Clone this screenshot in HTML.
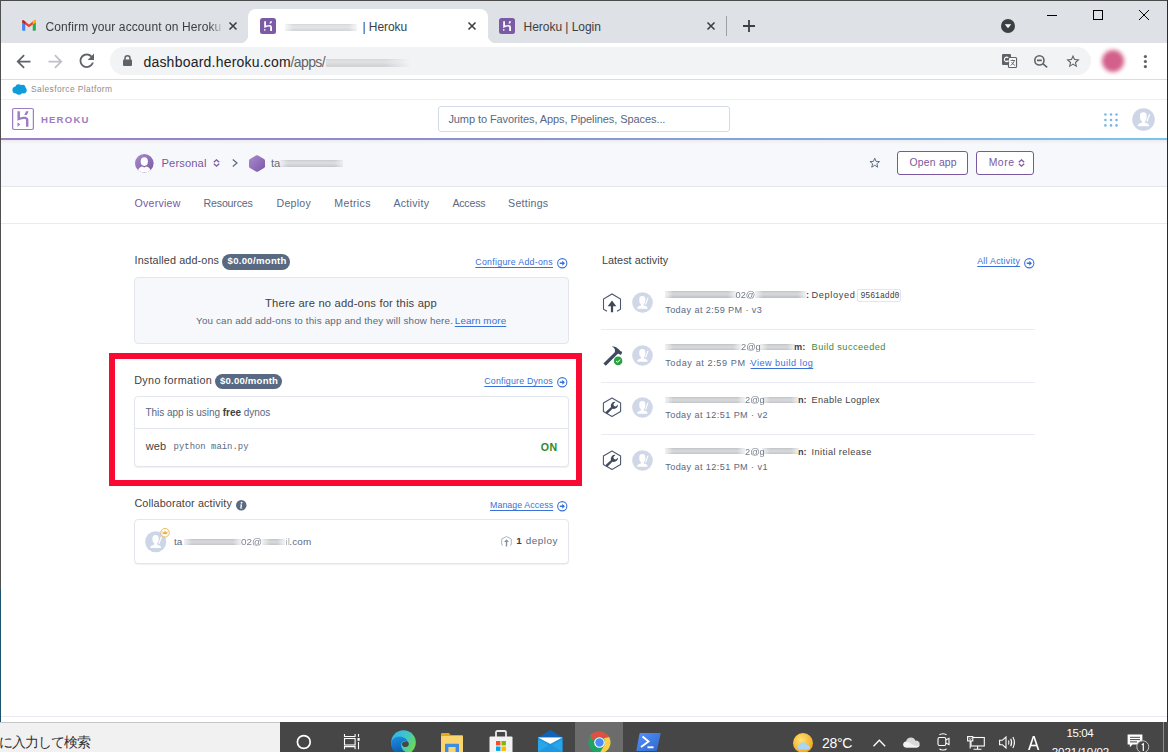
<!DOCTYPE html>
<html><head><meta charset="utf-8"><style>
*{margin:0;padding:0;box-sizing:border-box}
html,body{width:1168px;height:752px;overflow:hidden;background:#fff;font-family:"Liberation Sans",sans-serif}
.a{position:absolute}
.t{position:absolute;line-height:0;white-space:nowrap}
svg{position:absolute;overflow:visible}
.u{text-decoration:underline;text-underline-offset:1.5px;text-decoration-thickness:1px}
.blur{filter:blur(0.9px)}
.band{position:absolute;height:6.2px;background:linear-gradient(#b9bbbf 0,#c9cbce 1.2px,#d3d5d8 3px,#c6c8cb 5px,#b9bbbf 6.2px);filter:blur(.7px);opacity:.9;-webkit-mask-image:linear-gradient(90deg,rgba(0,0,0,.3),#000 8px,#000 calc(100% - 8px),rgba(0,0,0,.3))}

</style></head><body>
<!-- window frame -->
<div class="a" style="left:0;top:0;width:1168px;height:43px;background:#dee1e6"></div>
<div class="a" style="left:0;top:0;width:1168px;height:1px;background:#4a4a4a"></div>
<!-- active tab -->
<div class="a" style="left:248px;top:9px;width:240px;height:40px;background:#fff;border-radius:8px 8px 0 0"></div>
<div class="a" style="left:240px;top:35px;width:8px;height:8px;background:radial-gradient(circle at 0 0, #dee1e6 8px, #fff 8.5px)"></div>
<div class="a" style="left:488px;top:35px;width:8px;height:8px;background:radial-gradient(circle at 100% 0, #dee1e6 8px, #fff 8.5px)"></div>
<!-- toolbar -->
<div class="a" style="left:0;top:43px;width:1168px;height:36px;background:#fff"></div>
<div class="a" style="left:0;top:79px;width:1168px;height:1px;background:#dadce0"></div>
<div class="a" style="left:110px;top:47px;width:981px;height:28px;background:#f1f3f4;border-radius:14px"></div>
<!-- salesforce bar -->
<div class="a" style="left:0;top:99px;width:1168px;height:1px;background:#eceff4"></div>
<!-- heroku header -->
<div class="a" style="left:0;top:138px;width:1168px;height:2px;background:linear-gradient(90deg,#9d7ec3,#8a92d2 45%,#7bc6e8)"></div>
<div class="a" style="left:0;top:140px;width:1168px;height:46px;background:#f7f8fb"></div>
<div class="a" style="left:0;top:140px;width:1168px;height:4px;background:linear-gradient(#ececf0,#f7f8fb)"></div>
<div class="a" style="left:0;top:186px;width:1168px;height:1px;background:#e3e6ed"></div>
<div class="a" style="left:0;top:223px;width:1168px;height:1px;background:#e8ebf1"></div>
<!-- search -->
<div class="a" style="left:438px;top:106px;width:292px;height:26px;border:1px solid #d3dae8;border-radius:3px;background:#fff"></div>
<!-- buttons -->
<div class="a" style="left:897px;top:151px;width:71px;height:24px;border:1px solid #79589f;border-radius:3px;background:#fff"></div>
<div class="a" style="left:976px;top:151px;width:58px;height:24px;border:1px solid #79589f;border-radius:3px;background:#fff"></div>
<!-- add-ons -->
<div class="a" style="left:222px;top:254px;width:68px;height:16px;border-radius:8px;background:#596981"></div>
<div class="a" style="left:134px;top:277px;width:435px;height:67px;border:1px solid #e3e6ed;border-radius:4px;background:#f7f8fb"></div>
<!-- red box -->
<div class="a" style="left:109px;top:353px;width:473px;height:133px;border:6px solid #f80a32"></div>
<div class="a" style="left:215px;top:374px;width:67px;height:15px;border-radius:8px;background:#596981"></div>
<div class="a" style="left:134px;top:396px;width:435px;height:71px;border:1px solid #e3e6ed;border-radius:4px;background:#fff;box-shadow:0 1px 1px rgba(0,0,0,0.06)"></div>
<div class="a" style="left:135px;top:428px;width:433px;height:1px;background:#e3e6ed"></div>
<!-- collaborator -->
<div class="a" style="left:134px;top:519px;width:435px;height:45px;border:1px solid #e3e6ed;border-radius:4px;background:#fff;box-shadow:0 1px 1px rgba(0,0,0,0.06)"></div>
<!-- activity dividers -->
<div class="a" style="left:601px;top:329px;width:434px;height:1px;background:#e8ebf1"></div>
<div class="a" style="left:601px;top:382px;width:434px;height:1px;background:#e8ebf1"></div>
<div class="a" style="left:601px;top:434px;width:434px;height:1px;background:#e8ebf1"></div>
<!-- page bottom -->
<div class="a" style="left:0;top:716px;width:1168px;height:1px;background:#e8ebf3"></div>
<!-- taskbar -->
<div class="a" style="left:0;top:722px;width:1168px;height:30px;background:#464646"></div>
<div class="a" style="left:0;top:722px;width:280px;height:30px;background:#f1f1f1"></div>
<div class="a" style="left:0;top:722px;width:280px;height:1px;background:#c6c6c6"></div>
<div class="a" style="left:575px;top:722px;width:48px;height:30px;background:#6c6c6c"></div>
<!-- window borders -->
<div class="a" style="left:0;top:0;width:1px;height:590px;background:#505050"></div>
<div class="a" style="left:0;top:590px;width:1px;height:132px;background:#1c5470"></div>
<div class="a" style="left:1167px;top:0;width:1px;height:722px;background:#1d2b4f"></div>
<!-- gmail icon -->
<svg style="left:22px;top:20.2px" width="14" height="10.8" viewBox="0 0 14 11">
<path d="M0 2.2V10.2Q0 11 .8 11H3.2V4.3Z" fill="#4285f4"/>
<path d="M10.8 4.3V11H13.2Q14 11 14 10.2V2.2Z" fill="#34a853"/>
<path d="M0 1.6Q0 -.3 1.8.6L7 4.6 12.2.6Q14 -.3 14 1.6V2.2L7 7.4 0 2.2Z" fill="#ea4335"/>
<path d="M10.8 1.6L12.2.6Q14 -.3 14 1.6V2.2L10.8 4.5Z" fill="#fbbc04"/>
<path d="M3.2 1.6L1.8.6Q0 -.3 0 1.6V2.2L3.2 4.5Z" fill="#c5221f"/>
</svg>
<!-- tab close x -->
<svg style="left:229px;top:22px" width="8" height="8" viewBox="0 0 8 8"><path d="M.5.5L7.5 7.5M7.5.5L.5 7.5" stroke="#3c4043" stroke-width="1.6"/></svg>
<svg style="left:468px;top:22px" width="8" height="8" viewBox="0 0 8 8"><path d="M.5.5L7.5 7.5M7.5.5L.5 7.5" stroke="#3c4043" stroke-width="1.6"/></svg>
<svg style="left:707px;top:22px" width="8" height="8" viewBox="0 0 8 8"><path d="M.5.5L7.5 7.5M7.5.5L.5 7.5" stroke="#3c4043" stroke-width="1.6"/></svg>
<!-- heroku favicons -->
<svg style="left:260px;top:18px" width="16" height="16" viewBox="0 0 16 16">
<rect width="16" height="16" rx="2.5" fill="#7b5ba6"/>
<path d="M4.2 3.2H6V7.6Q8 6.9 9.6 6.9 12 6.9 12 9.2V13H10.2V9.5Q10.2 8.5 9.2 8.5 7.6 8.5 4.2 9.9Z" fill="#fff"/>
<path d="M9.3 5.6H11Q11.9 4.4 12 3.2H10.3Q10 4.6 9.3 5.6Z" fill="#fff"/>
<path d="M4.2 13V10.8L6 11.9Z" fill="#fff"/>
</svg>
<svg style="left:499px;top:18px" width="16" height="16" viewBox="0 0 16 16">
<rect width="16" height="16" rx="2.5" fill="#7b5ba6"/>
<path d="M4.2 3.2H6V7.6Q8 6.9 9.6 6.9 12 6.9 12 9.2V13H10.2V9.5Q10.2 8.5 9.2 8.5 7.6 8.5 4.2 9.9Z" fill="#fff"/>
<path d="M9.3 5.6H11Q11.9 4.4 12 3.2H10.3Q10 4.6 9.3 5.6Z" fill="#fff"/>
<path d="M4.2 13V10.8L6 11.9Z" fill="#fff"/>
</svg>
<!-- blurred tab name -->
<div class="band" style="left:285px;top:23.5px;width:72px;height:7px;opacity:.6"></div>
<!-- separator, plus -->
<div class="a" style="left:726px;top:16px;width:1px;height:20px;background:#9aa0a6"></div>
<svg style="left:743px;top:20px" width="12" height="12" viewBox="0 0 12 12"><path d="M6 0V12M0 6H12" stroke="#3c4043" stroke-width="1.8"/></svg>
<!-- dropdown circle -->
<svg style="left:1001px;top:19px" width="14" height="14" viewBox="0 0 14 14"><circle cx="7" cy="7" r="7" fill="#3c4043"/><path d="M3.8 5.3H10.2L7 9.2Z" fill="#fff"/></svg>
<!-- window controls -->
<div class="a" style="left:1047px;top:15px;width:10px;height:1px;background:#000"></div>
<div class="a" style="left:1093px;top:10px;width:10px;height:10px;border:1px solid #000"></div>
<svg style="left:1139px;top:10px" width="10" height="10" viewBox="0 0 10 10"><path d="M0 0L10 10M10 0L0 10" stroke="#000" stroke-width="1"/></svg>
<!-- nav arrows -->
<svg style="left:12.5px;top:50.5px" width="21" height="21" viewBox="0 0 24 24"><path d="M20 11H7.83l5.59-5.59L12 4l-8 8 8 8 1.41-1.41L7.83 13H20v-2z" fill="#5f6368"/></svg>
<svg style="left:44.5px;top:50.5px" width="21" height="21" viewBox="0 0 24 24"><path d="M12 4l-1.41 1.41L16.17 11H4v2h12.17l-5.58 5.59L12 20l8-8z" fill="#bdc1c6"/></svg>
<svg style="left:76.4px;top:50.4px" width="21.6" height="21.6" viewBox="0 0 24 24"><path d="M17.65 6.35C16.2 4.9 14.21 4 12 4c-4.42 0-7.99 3.58-7.99 8s3.57 8 7.99 8c3.73 0 6.84-2.55 7.73-6h-2.08c-.82 2.33-3.04 4-5.65 4-3.31 0-6-2.69-6-6s2.69-6 6-6c1.66 0 3.14.69 4.22 1.78L13 11h7V4l-2.35 2.35z" fill="#5f6368"/></svg>
<!-- lock -->
<svg style="left:122.5px;top:55px" width="9" height="11" viewBox="0 0 9 11"><path d="M2 5V3.3Q2 .8 4.5.8 7 .8 7 3.3V5" fill="none" stroke="#5f6368" stroke-width="1.5"/><rect x="0" y="4.6" width="9" height="6.4" rx="1" fill="#5f6368"/></svg>
<!-- url blurred -->
<div class="band" style="left:326px;top:58.5px;width:85px;height:8px;opacity:.55;-webkit-mask-image:linear-gradient(90deg,#000 70%,transparent)"></div>
<!-- translate -->
<svg style="left:1001.5px;top:54px" width="15" height="14" viewBox="0 0 15 14">
<rect x="0" y="0" width="9" height="11" rx="1" fill="#5f6368"/>
<rect x="6.5" y="3.5" width="8" height="10" rx="1" fill="#fff" stroke="#5f6368" stroke-width="1.2"/>
<path d="M6.3 3.8A2.3 2.3 0 1 0 6.4 7H4.5" fill="none" stroke="#fff" stroke-width="1.1"/>
<path d="M8.5 6.5H13M10.7 5.5V6.5M12.5 6.5Q11.5 10 8.5 11.5M9.5 8Q11 10.5 13 11.5" fill="none" stroke="#5f6368" stroke-width=".9"/>
</svg>
<!-- zoom -->
<svg style="left:1034px;top:55px" width="14" height="13" viewBox="0 0 14 13"><circle cx="5.4" cy="5.4" r="4.6" fill="none" stroke="#5f6368" stroke-width="1.6"/><path d="M3 5.4H7.8M8.7 8.7L13.2 12.4" stroke="#5f6368" stroke-width="1.6"/></svg>
<!-- star -->
<svg style="left:1066px;top:53.5px" width="14" height="14" viewBox="0 0 24 24"><path d="M22 9.24l-7.19-.62L12 2 9.19 8.63 2 9.24l5.46 4.73L5.82 21 12 17.27 18.18 21l-1.63-7.03L22 9.24zM12 15.4l-3.76 2.27 1-4.28-3.32-2.88 4.38-.38L12 6.1l1.71 4.04 4.38.38-3.32 2.88 1 4.28L12 15.4z" fill="#5f6368" transform="translate(12 12) scale(1.15) translate(-12 -11.5)"/></svg>
<!-- profile -->
<div class="a" style="left:1102px;top:50px;width:22px;height:22px;border-radius:50%;background:#d3608a;filter:blur(2px)"></div>
<!-- menu dots -->
<svg style="left:1143px;top:54px" width="5" height="15" viewBox="0 0 5 15"><circle cx="2.4" cy="2.5" r="1.6" fill="#5f6368"/><circle cx="2.4" cy="7.5" r="1.6" fill="#5f6368"/><circle cx="2.4" cy="12.6" r="1.6" fill="#5f6368"/></svg>
<!-- salesforce cloud -->
<svg style="left:12px;top:84px" width="15" height="11" viewBox="0 0 15 11"><g fill="#0d9dda"><circle cx="4" cy="6" r="3.6"/><circle cx="6.5" cy="3.3" r="3"/><circle cx="10.5" cy="3.8" r="3"/><circle cx="11.6" cy="6.3" r="3.1"/><circle cx="7" cy="7.5" r="3.3"/></g></svg>
<!-- heroku logo -->
<svg style="left:11.5px;top:108px" width="22" height="22" viewBox="1.23 0 21.54 24" preserveAspectRatio="none"><path d="M20.61 0H3.39C2.189 0 1.23.96 1.23 2.16v19.681c0 1.198.959 2.159 2.16 2.159h17.22c1.2 0 2.159-.961 2.159-2.159V2.16C22.77.96 21.811 0 20.61 0zm.96 21.841c0 .539-.421.96-.96.96H3.39c-.54 0-.96-.421-.96-.96V2.16c0-.54.42-.96.96-.96h17.22c.539 0 .96.42.96.96v19.681zM6.63 20.399L9.33 18l-2.7-2.4v4.799zm9.72-9.719c-.479-.48-1.379-1.08-2.879-1.08-1.621 0-3.301.421-4.5.84V3.6h-2.4v10.38l1.68-.78s2.76-1.26 5.16-1.26c1.2 0 1.5.66 1.5 1.26v7.2h2.4v-7.2c.059-.12.059-1.5-.961-2.52zM13.17 7.5h2.4c1.08-1.26 1.62-2.521 1.8-3.9h-2.399c-.241 1.379-.841 2.64-1.801 3.9z" fill="#9e7cc1"/></svg>
<!-- grid dots -->
<svg style="left:1103px;top:112px" width="16" height="16" viewBox="0 0 16 16"><g fill="#79b9e3"><circle cx="2.4" cy="2.5" r="1.3"/><circle cx="8" cy="2.5" r="1.3"/><circle cx="13.5" cy="2.5" r="1.3"/><circle cx="2.4" cy="8" r="1.3"/><circle cx="8" cy="8" r="1.3"/><circle cx="13.5" cy="8" r="1.3"/><circle cx="2.4" cy="13.4" r="1.3"/><circle cx="8" cy="13.4" r="1.3"/><circle cx="13.5" cy="13.4" r="1.3"/></g></svg>
<!-- header avatar -->
<svg style="left:1131.5px;top:107.5px" width="23" height="23" viewBox="0 0 23 23"><circle cx="11.5" cy="11.5" r="11.3" fill="#cdd6e6"/>
<path d="M8 7.5Q8 4.3 11.3 4.3 14.6 4.3 14.6 7.5V10Q14.6 12.3 12.8 13.3V14.5L15.5 15.5Q17 16 17 17.5V18.3H5.8V17.5Q5.8 16 7.3 15.5L10 14.5V13.3Q8 12.3 8 10Z" fill="#fff"/>
<path d="M14.8 13.8L17.6 6.2" stroke="#fff" stroke-width="1.2"/></svg>
<!-- personal avatar -->
<svg style="left:134.7px;top:154.1px" width="18.6" height="18.6" viewBox="0 0 18.6 18.6"><defs><linearGradient id="pg" x1="0" y1="0" x2="1" y2="1"><stop offset="0" stop-color="#a98bd0"/><stop offset="1" stop-color="#79589f"/></linearGradient>
<clipPath id="pc"><circle cx="9.3" cy="9.3" r="9.3"/></clipPath></defs>
<circle cx="9.3" cy="9.3" r="9.3" fill="url(#pg)"/>
<g clip-path="url(#pc)" fill="#fff"><ellipse cx="9.3" cy="7.6" rx="3.6" ry="4.4"/><path d="M2.5 18.6Q3 13.5 7 12.6L9.3 13.6 11.6 12.6Q15.6 13.5 16.1 18.6Z"/></g>
<path d="M5 7.6Q5 3 9.3 3" fill="none"/></svg>
<!-- caret up/down personal -->
<svg style="left:212.5px;top:159px" width="7" height="8" viewBox="0 0 7 8"><path d="M.8 3.2L3.5.8 6.2 3.2M.8 4.8L3.5 7.2 6.2 4.8" fill="none" stroke="#79589f" stroke-width="1.3"/></svg>
<!-- chevron -->
<svg style="left:231.5px;top:159px" width="6" height="8" viewBox="0 0 6 8"><path d="M.8.5L5 4 .8 7.5" fill="none" stroke="#596981" stroke-width="1.2"/></svg>
<!-- hexagon -->
<svg style="left:249px;top:154.5px" width="16" height="17" viewBox="0 0 16 17"><defs><linearGradient id="hg" x1="0" y1="0" x2="1" y2="1"><stop offset="0" stop-color="#a98bd0"/><stop offset="1" stop-color="#7a58a3"/></linearGradient></defs>
<path d="M6.9.6Q8 0 9.1.6L15 4Q16 4.6 16 5.8V11.2Q16 12.4 15 13L9.1 16.4Q8 17 6.9 16.4L1 13Q0 12.4 0 11.2V5.8Q0 4.6 1 4Z" fill="url(#hg)"/></svg>
<div class="t" style="left:271px;top:162.5px;font-size:11.2px;color:#596981;font-family:'Liberation Sans',sans-serif">ta</div>
<div class="band" style="left:280px;top:159.5px;width:63px;height:7.5px;opacity:.75"></div>
<!-- star -->
<svg style="left:868.5px;top:156.5px" width="11.5" height="11.5" viewBox="0 0 24 24"><path d="M12 2.5L14.8 9.2 22 9.6 16.4 14.2 18.3 21.3 12 17.3 5.7 21.3 7.6 14.2 2 9.6 9.2 9.2Z" fill="none" stroke="#596981" stroke-width="2" stroke-linejoin="round"/></svg>
<!-- more caret -->
<svg style="left:1017.5px;top:159px" width="7" height="8" viewBox="0 0 7 8"><path d="M.8 3.2L3.5.8 6.2 3.2M.8 4.8L3.5 7.2 6.2 4.8" fill="none" stroke="#79589f" stroke-width="1.3"/></svg>
<!-- circle arrow link icons -->
<svg style="left:557px;top:257.5px" width="10.5" height="10.5" viewBox="0 0 10 10"><circle cx="5" cy="5" r="4.4" fill="none" stroke="#3a71d8" stroke-width="1"/><path d="M2.6 4.3H5V2.6L7.6 5 5 7.4V5.7H2.6Z" fill="#3a71d8"/></svg>
<svg style="left:557px;top:376.5px" width="10.5" height="10.5" viewBox="0 0 10 10"><circle cx="5" cy="5" r="4.4" fill="none" stroke="#3a71d8" stroke-width="1"/><path d="M2.6 4.3H5V2.6L7.6 5 5 7.4V5.7H2.6Z" fill="#3a71d8"/></svg>
<svg style="left:557px;top:500.5px" width="10.5" height="10.5" viewBox="0 0 10 10"><circle cx="5" cy="5" r="4.4" fill="none" stroke="#3a71d8" stroke-width="1"/><path d="M2.6 4.3H5V2.6L7.6 5 5 7.4V5.7H2.6Z" fill="#3a71d8"/></svg>
<svg style="left:1024px;top:257.5px" width="10.5" height="10.5" viewBox="0 0 10 10"><circle cx="5" cy="5" r="4.4" fill="none" stroke="#3a71d8" stroke-width="1"/><path d="M2.6 4.3H5V2.6L7.6 5 5 7.4V5.7H2.6Z" fill="#3a71d8"/></svg>
<!-- info icon -->
<svg style="left:236px;top:500px" width="10.5" height="10.5" viewBox="0 0 10 10"><circle cx="5" cy="5" r="5" fill="#596981"/><circle cx="5.3" cy="2.6" r=".9" fill="#fff"/><path d="M4 4.3H5.9L5.3 7.6H6.1L6 8.2H3.9L4.5 4.9H3.9Z" fill="#fff"/></svg>
<!-- collab avatar -->
<svg style="left:144.5px;top:530.5px" width="21.5" height="21.5" viewBox="0 0 23 23"><circle cx="11.5" cy="11.5" r="11.3" fill="#cdd6e6"/>
<path d="M8 7.5Q8 4.3 11.3 4.3 14.6 4.3 14.6 7.5V10Q14.6 12.3 12.8 13.3V14.5L15.5 15.5Q17 16 17 17.5V18.3H5.8V17.5Q5.8 16 7.3 15.5L10 14.5V13.3Q8 12.3 8 10Z" fill="#fff"/>
<path d="M14.8 13.8L17.6 6.2" stroke="#fff" stroke-width="1.2"/></svg>
<svg style="left:159.5px;top:528px" width="10" height="9.5" viewBox="0 0 10 10"><circle cx="5" cy="5" r="4.5" fill="#fff" stroke="#e8b55a" stroke-width="1"/><path d="M2.6 6.6L2.3 3.3 3.9 4.6 5 2.7 6.1 4.6 7.7 3.3 7.4 6.6Z" fill="#e8b55a"/></svg>
<!-- collab email blurred -->
<div class="t" style="left:174px;top:541.7px;font-size:9.9px;color:#596981">ta</div>
<div class="t" style="left:241px;top:541.7px;font-size:9.9px;color:#7d8594;filter:blur(.35px)">02@</div>
<div class="t" style="left:285.5px;top:541.7px;font-size:9.9px;color:#a9b0bb;filter:blur(.3px)">il</div>
<div class="band" style="left:184px;top:539.2px;width:57px"></div>
<div class="band" style="left:262px;top:539.2px;width:23px"></div>
<!-- deploy small icon -->
<svg style="left:500.5px;top:535.5px" width="11" height="11" viewBox="0 0 11 11"><path d="M2 9.5L.7 8.6V3L5.5.5 10.3 3V8.6L9 9.5" fill="none" stroke="#aab3c3" stroke-width="1"/><path d="M3 6H4.8V10.5H6.2V6H8L5.5 3.3Z" fill="#8793a8"/></svg>
<svg width="0" height="0" style="position:absolute"><defs>
<filter id="hb" x="-10%" y="-50%" width="120%" height="200%"><feGaussianBlur stdDeviation="2.5 0.35"/></filter>
<filter id="hb2" x="-10%" y="-50%" width="120%" height="200%"><feGaussianBlur stdDeviation="0.5 0.2"/></filter>
</defs></svg>
<!-- row icons -->
<svg style="left:601.5px;top:292.5px" width="20" height="20" viewBox="0 0 20 20"><path d="M5 18.3L1.5 16.3V6L10 1 18.5 6V16.3L15 18.3" fill="none" stroke="#4b5870" stroke-width="1.1"/><path d="M5.7 13.3L10 7.5 14.3 13.3H11.1V19.2H8.9V13.3Z" fill="#3f4a5f"/></svg>
<svg style="left:601.5px;top:345px" width="22" height="22" viewBox="0 0 22 22"><path d="M9.8 1.2Q13.8 1 17 4.4L18.6 6.2 20.2 6.8 19.6 9 18.2 10 17 8.8 15.6 8.9 3.8 20.8 1.4 18.6 12.8 7.2Q13.4 5.4 12.6 3.8Q11.8 2.4 9.8 1.2Z" fill="#3f4a5f"/><circle cx="16.1" cy="15.9" r="4.3" fill="#2da043"/><path d="M14 16L15.6 17.3 18.1 14.6" fill="none" stroke="#fff" stroke-width="1"/></svg>
<svg style="left:601.5px;top:397px" width="20" height="20" viewBox="0 0 20 20"><path d="M10 1L18.6 6V14.6L10 19.6 1.4 14.6V6Z" fill="none" stroke="#4b5870" stroke-width="1.1" stroke-linejoin="round"/><path d="M3.3 15.2L5.2 17.1 10.4 11.8Q13.1 12.4 14.8 10.8 16.2 9.4 16 7.4L13.9 9.4 11.9 8.9 11.4 6.9 13.4 4.9Q11.3 4.6 9.9 6 8.3 7.7 8.9 10.3Z" fill="#3f4a5f"/></svg>
<svg style="left:601.5px;top:450px" width="20" height="20" viewBox="0 0 20 20"><path d="M10 1L18.6 6V14.6L10 19.6 1.4 14.6V6Z" fill="none" stroke="#4b5870" stroke-width="1.1" stroke-linejoin="round"/><path d="M3.3 15.2L5.2 17.1 10.4 11.8Q13.1 12.4 14.8 10.8 16.2 9.4 16 7.4L13.9 9.4 11.9 8.9 11.4 6.9 13.4 4.9Q11.3 4.6 9.9 6 8.3 7.7 8.9 10.3Z" fill="#3f4a5f"/></svg>
<!-- avatars -->
<svg style="left:632px;top:291.8px" width="21" height="21" viewBox="0 0 23 23"><circle cx="11.5" cy="11.5" r="11.3" fill="#d0d8e7"/><path d="M8 7.5Q8 4.3 11.3 4.3 14.6 4.3 14.6 7.5V10Q14.6 12.3 12.8 13.3V14.5L15.5 15.5Q17 16 17 17.5V18.3H5.8V17.5Q5.8 16 7.3 15.5L10 14.5V13.3Q8 12.3 8 10Z" fill="#fff"/><path d="M14.8 13.8L17.6 6.2" stroke="#fff" stroke-width="1.2"/></svg>
<svg style="left:632px;top:344.5px" width="21" height="21" viewBox="0 0 23 23"><circle cx="11.5" cy="11.5" r="11.3" fill="#d0d8e7"/><path d="M8 7.5Q8 4.3 11.3 4.3 14.6 4.3 14.6 7.5V10Q14.6 12.3 12.8 13.3V14.5L15.5 15.5Q17 16 17 17.5V18.3H5.8V17.5Q5.8 16 7.3 15.5L10 14.5V13.3Q8 12.3 8 10Z" fill="#fff"/><path d="M14.8 13.8L17.6 6.2" stroke="#fff" stroke-width="1.2"/></svg>
<svg style="left:632px;top:397px" width="21" height="21" viewBox="0 0 23 23"><circle cx="11.5" cy="11.5" r="11.3" fill="#d0d8e7"/><path d="M8 7.5Q8 4.3 11.3 4.3 14.6 4.3 14.6 7.5V10Q14.6 12.3 12.8 13.3V14.5L15.5 15.5Q17 16 17 17.5V18.3H5.8V17.5Q5.8 16 7.3 15.5L10 14.5V13.3Q8 12.3 8 10Z" fill="#fff"/><path d="M14.8 13.8L17.6 6.2" stroke="#fff" stroke-width="1.2"/></svg>
<svg style="left:632px;top:449.5px" width="21" height="21" viewBox="0 0 23 23"><circle cx="11.5" cy="11.5" r="11.3" fill="#d0d8e7"/><path d="M8 7.5Q8 4.3 11.3 4.3 14.6 4.3 14.6 7.5V10Q14.6 12.3 12.8 13.3V14.5L15.5 15.5Q17 16 17 17.5V18.3H5.8V17.5Q5.8 16 7.3 15.5L10 14.5V13.3Q8 12.3 8 10Z" fill="#fff"/><path d="M14.8 13.8L17.6 6.2" stroke="#fff" stroke-width="1.2"/></svg>
<!-- blurred names -->
<div class="t" style="left:806px;top:295.2px;font-size:9.2px;color:#3f3f44;font-weight:700">:</div>
<div class="t" style="left:794px;top:347.4px;font-size:9.2px;color:#3f3f44;font-weight:700;letter-spacing:0px">m:</div>
<div class="t" style="left:798px;top:400.3px;font-size:9.2px;color:#3f3f44;font-weight:700;letter-spacing:0px">n:</div>
<div class="t" style="left:798px;top:452.1px;font-size:9.2px;color:#3f3f44;font-weight:700;letter-spacing:0px">n:</div>
<div class="band" style="left:665px;top:291.4px;width:70.5px"></div>
<div class="band" style="left:754.5px;top:291.4px;width:51.5px"></div>
<div class="t" style="left:735.5px;top:295.2px;font-size:9.3px;color:#737b88;filter:blur(.3px)">02@</div>
<div class="band" style="left:665px;top:343.6px;width:76px"></div>
<div class="band" style="left:760px;top:343.6px;width:35px"></div>
<div class="t" style="left:741px;top:347.4px;font-size:9.3px;color:#737b88;filter:blur(.3px)">2@g</div>
<div class="band" style="left:665px;top:396.5px;width:80px"></div>
<div class="band" style="left:762px;top:396.5px;width:37px"></div>
<div class="t" style="left:745px;top:400.3px;font-size:9.3px;color:#737b88;filter:blur(.3px)">2@g</div>
<div class="band" style="left:665px;top:448.3px;width:80px"></div>
<div class="band" style="left:762px;top:448.3px;width:37px"></div>
<div class="t" style="left:745px;top:452.1px;font-size:9.3px;color:#737b88;filter:blur(.3px)">2@g</div>
<!-- code badge -->
<div class="a" style="left:857px;top:289px;width:43.5px;height:12.5px;border:1px solid #e3e6ed;border-radius:2px;background:#fff"></div>
<div class="t" style="left:860.5px;top:295.5px;font-size:8.2px;color:#3f3f44;font-family:'Liberation Mono',monospace;letter-spacing:-.05px">9561add0</div>
<!-- build log sep -->
<!-- taskbar icons -->
<svg style="left:296px;top:734px" width="16" height="16" viewBox="0 0 16 16"><circle cx="7.8" cy="8" r="6.4" fill="none" stroke="#fff" stroke-width="1.7"/></svg>
<svg style="left:343px;top:733px" width="19" height="18" viewBox="0 0 19 18"><g fill="none" stroke="#fff" stroke-width="1.1"><path d="M1.5 1V3.5H12.1V1"/><rect x="1.5" y="5.5" width="10.6" height="6.5"/><path d="M1.5 16.3V13.6H12.1V16.3"/><path d="M15.5 1V3.8M15.5 9V16.3"/></g><rect x="14.5" y="5" width="2.2" height="2.8" fill="#fff"/></svg>
<svg style="left:390.5px;top:729.8px" width="25" height="25" viewBox="0 0 25 25"><defs><linearGradient id="eg1" x1="0" y1="0" x2="1" y2=".5"><stop offset="0" stop-color="#2fb5ef"/><stop offset=".6" stop-color="#3fc6c6"/><stop offset="1" stop-color="#6ad85a"/></linearGradient><linearGradient id="eg2" x1="0" y1="0" x2=".3" y2="1"><stop offset="0" stop-color="#1e8fe6"/><stop offset="1" stop-color="#0b5aa8"/></linearGradient></defs>
<circle cx="12.5" cy="12.5" r="12.3" fill="url(#eg1)"/>
<path d="M.2 12.5Q1.5 7 8 6.5 14 6.5 16.5 11 12.5 10 10.5 13 9 17.5 13 21 16 23.5 20.5 22.5 17 24.8 12.5 24.8 .2 24.5 .2 12.5Z" fill="url(#eg2)"/>
<path d="M10.8 14Q12 10.8 16.2 11.2 18.5 12.5 17.5 15.5 16.2 17.5 13 17 11 16.2 10.8 14Z" fill="#464646"/>
</svg>
<svg style="left:441px;top:732.5px" width="22" height="20" viewBox="0 0 22 20"><path d="M0 1Q0 0 1 0H8L9.5 2H21Q22 2 22 3V5H0Z" fill="#e9a610"/><rect x="0" y="3" width="22" height="17" rx="1" fill="#f9d46f"/><path d="M4 19.5V11.5Q4 10.8 4.7 10.8H17.3Q18 10.8 18 11.5V19.5H14.6V14H7.4V19.5Z" fill="#3e8de4"/></svg>
<svg style="left:488.5px;top:729.8px" width="24" height="23" viewBox="0 0 24 23"><path d="M7 7V2.5Q7 1 8.5 1H15.5Q17 1 17 2.5V7" fill="none" stroke="#e8e8e8" stroke-width="1.8"/><rect x="0.5" y="6.5" width="23" height="17" rx="1" fill="#f2f2f2"/><rect x="7" y="11" width="4.4" height="4.4" fill="#f25022"/><rect x="12.5" y="11" width="4.4" height="4.4" fill="#7fba00"/><rect x="7" y="16.5" width="4.4" height="4.4" fill="#00a4ef"/><rect x="12.5" y="16.5" width="4.4" height="4.4" fill="#ffb900"/></svg>
<svg style="left:537.5px;top:730.3px" width="25" height="22" viewBox="0 0 25 22"><path d="M0 7.5L12.4 0 24.5 7.5V22H0Z" fill="#0f64b8"/><path d="M0 7.5H24.5V22H0Z" fill="#27a6ea"/><path d="M0 7.5H24.5L12.3 14Z" fill="#fff"/><path d="M0 7.5L12.3 14 24.5 7.5V9.5L12.3 16 0 9.5Z" fill="#1d8fd8" opacity=".6"/><path d="M0 22L12.3 14 24.5 22Z" fill="#1b90e0" opacity=".6"/></svg>
<svg style="left:587.5px;top:730.6px" width="23" height="23" viewBox="0 0 24 24"><circle cx="12" cy="12" r="11.5" fill="#1da462"/><path d="M12 .5A11.5 11.5 0 0 1 22 6.3H12Q7 6.3 5.3 10.2L2.1 4.8A11.5 11.5 0 0 1 12 .5Z" fill="#dd5144"/><path d="M22 6.3A11.5 11.5 0 0 1 12 23.5L17 14.8Q18.7 11 16.5 7.5Z" fill="#ffcd46"/><circle cx="12" cy="12" r="5.6" fill="#fff"/><circle cx="12" cy="12" r="4.4" fill="#4c8bf5"/></svg>
<svg style="left:635.5px;top:732.5px" width="25" height="18" viewBox="0 0 25 18"><defs><linearGradient id="psg" x1="0" y1="0" x2="1" y2="1"><stop offset="0" stop-color="#5391fe"/><stop offset="1" stop-color="#2e67c9"/></linearGradient></defs><path d="M4.3 0H24Q24.8 0 24.6 .8L21 17.2Q20.8 18 20 18H1Q.2 18 .4 17.2L3.5.8Q3.6 0 4.3 0Z" fill="url(#psg)"/><path d="M6.5 3.5L12.5 8.5 5 14" fill="none" stroke="#fff" stroke-width="1.9"/><path d="M11.5 14.3H17.5" stroke="#fff" stroke-width="1.9"/></svg>
<!-- weather -->
<svg style="left:792.5px;top:732.5px" width="22" height="20" viewBox="0 0 22 20"><defs><radialGradient id="sg" cx=".4" cy=".35" r=".7"><stop offset="0" stop-color="#ffe27a"/><stop offset="1" stop-color="#f4a316"/></radialGradient></defs><circle cx="10" cy="10" r="10" fill="url(#sg)"/><path d="M7 16.5Q4.5 16.5 4.5 14.3 4.5 12.3 6.8 12.1 7.5 9.3 10.5 9.3 13.4 9.3 14 12 16.5 11.8 17 14 17 16.5 14.5 16.5Z" fill="#a9d6f5"/></svg>
<svg style="left:872.5px;top:738.5px" width="13" height="8" viewBox="0 0 13 8"><path d="M.5 7.2L6.3 1.2 12.2 7.2" fill="none" stroke="#fff" stroke-width="1.3"/></svg>
<svg style="left:902.5px;top:736px" width="17" height="12" viewBox="0 0 17 12"><path d="M3.5 11.5Q.3 11.5.3 8.6.3 6 3 5.6 4 1.5 8 1.5 11.2 1.5 12.3 4.6 16.7 4.6 16.7 8.2 16.7 11.5 13.5 11.5Z" fill="#d9d9d9"/><path d="M3.5 11.5Q.3 11.5.3 8.6.3 6.2 2.8 5.8 6 5.6 9.5 8.5 12 10.5 16.5 9.5 16 11.5 13.5 11.5Z" fill="#f2f2f2"/></svg>
<svg style="left:937px;top:733px" width="13" height="18" viewBox="0 0 13 18"><g fill="none" stroke="#fff" stroke-width="1.1"><path d="M2.5 2Q3 .8 6 .8 9 .8 9.5 2"/><rect x="1" y="4.5" width="7.8" height="8" rx="1.5"/><path d="M8.8 7L12 5.3V11.7L8.8 10"/><path d="M2.5 15.8Q3 17 6 17 9 17 9.5 15.8"/></g></svg>
<svg style="left:966.5px;top:736px" width="18" height="14" viewBox="0 0 18 14"><g fill="none" stroke="#fff" stroke-width="1.1"><rect x="4" y="1.5" width="13.3" height="8.5"/><path d="M10.6 10V13M6.5 13.2H14.5"/><rect x="0.6" y="0.6" width="5.2" height="4.3" fill="#464646"/><path d="M3.2 4.9V12.5"/></g><path d="M1.8 2.2L3.2 3.5 4.7 2.2" fill="none" stroke="#fff" stroke-width=".9"/></svg>
<svg style="left:998.5px;top:735.5px" width="17" height="13" viewBox="0 0 17 13"><g fill="none" stroke="#fff" stroke-width="1.1"><path d="M.6 4.3H3.3L7 1V12L3.3 8.7H.6Z"/><path d="M9.5 4.5Q10.5 6.5 9.5 8.5"/><path d="M11.7 2.8Q13.6 6.5 11.7 10.2"/><path d="M13.9 1Q16.9 6.5 13.9 12"/></g></svg>
<div class="t" style="left:1027.5px;top:742.5px;font-size:20px;color:#fff;font-family:'Liberation Sans',sans-serif;transform:scaleX(.85);transform-origin:left">A</div>
<svg style="left:1127px;top:734px" width="24" height="18" viewBox="0 0 24 18"><path d="M.6.6H15.4V10.6H5.5L2.8 13.3V10.6H.6Z" fill="#fff"/><path d="M3 3.3H13M3 5.6H13M3 7.9H10" stroke="#464646" stroke-width="1"/><circle cx="15.8" cy="12.8" r="6" fill="#464646" stroke="#bfbfbf" stroke-width="1"/><path d="M14.8 10.8L16.3 9.8V17" fill="none" stroke="#fff" stroke-width="1.2"/></svg>
<div class="a" style="left:1163px;top:722px;width:1px;height:30px;background:#8a8a8a"></div>

<div class="t" id="tab1" style="left:45.50px;top:26.74px;font-size:12px;color:#3c4043;font-weight:400;letter-spacing:0.103px;font-family:'Liberation Sans', sans-serif;line-height:16px;margin-top:-8px;-webkit-mask-image:linear-gradient(90deg,#000 163px,transparent 178px)">Confirm your account on Heroku</div>
<div class="t" id="tab2b" style="left:362.50px;top:26.74px;font-size:12px;color:#3c4043;font-weight:400;letter-spacing:-0.056px;font-family:'Liberation Sans', sans-serif;">| Heroku</div>
<div class="t" id="tab3" style="left:523.60px;top:26.54px;font-size:12px;color:#3c4043;font-weight:400;letter-spacing:-0.045px;font-family:'Liberation Sans', sans-serif;">Heroku | Login</div>
<div class="t" id="url1" style="left:143.40px;top:61.55px;font-size:14px;color:#202124;font-weight:400;letter-spacing:0.219px;font-family:'Liberation Sans', sans-serif;">dashboard.heroku.com</div>
<div class="t" id="url2" style="left:290.50px;top:61.55px;font-size:14px;color:#5f6368;font-weight:400;letter-spacing:-0.600px;font-family:'Liberation Sans', sans-serif;">/apps/</div>
<div class="t" id="sfp" style="left:31.00px;top:88.99px;font-size:8.4px;color:#8e8e8e;font-weight:400;letter-spacing:0.444px;font-family:'Liberation Sans', sans-serif;">Salesforce Platform</div>
<div class="t" id="heroku" style="left:40.90px;top:119.97px;font-size:9.6px;color:#9e7cc1;font-weight:700;letter-spacing:1.200px;font-family:'Liberation Sans', sans-serif;">HEROKU</div>
<div class="t" id="search" style="left:448.40px;top:119.19px;font-size:11px;color:#596981;font-weight:400;letter-spacing:-0.084px;font-family:'Liberation Sans', sans-serif;">Jump to Favorites, Apps, Pipelines, Spaces...</div>
<div class="t" id="personal" style="left:161.50px;top:163.02px;font-size:11.2px;color:#79589f;font-weight:400;letter-spacing:0.112px;font-family:'Liberation Sans', sans-serif;">Personal</div>
<div class="t" id="openapp" style="left:909.60px;top:162.50px;font-size:10.4px;color:#79589f;font-weight:500;letter-spacing:0.199px;font-family:'Liberation Sans', sans-serif;">Open app</div>
<div class="t" id="more" style="left:988.70px;top:162.50px;font-size:10.4px;color:#79589f;font-weight:500;letter-spacing:0.531px;font-family:'Liberation Sans', sans-serif;">More</div>
<div class="t" id="nav0" style="left:134.60px;top:202.73px;font-size:10.6px;color:#79589f;font-weight:400;letter-spacing:0.224px;font-family:'Liberation Sans', sans-serif;">Overview</div>
<div class="t" id="nav1" style="left:203.60px;top:202.73px;font-size:10.6px;color:#596981;font-weight:400;letter-spacing:-0.181px;font-family:'Liberation Sans', sans-serif;">Resources</div>
<div class="t" id="nav2" style="left:276.60px;top:202.73px;font-size:10.6px;color:#596981;font-weight:400;letter-spacing:0.240px;font-family:'Liberation Sans', sans-serif;">Deploy</div>
<div class="t" id="nav3" style="left:334.30px;top:202.73px;font-size:10.6px;color:#596981;font-weight:400;letter-spacing:0.334px;font-family:'Liberation Sans', sans-serif;">Metrics</div>
<div class="t" id="nav4" style="left:393.40px;top:202.73px;font-size:10.6px;color:#596981;font-weight:400;letter-spacing:0.286px;font-family:'Liberation Sans', sans-serif;">Activity</div>
<div class="t" id="nav5" style="left:452.40px;top:202.73px;font-size:10.6px;color:#596981;font-weight:400;letter-spacing:-0.200px;font-family:'Liberation Sans', sans-serif;">Access</div>
<div class="t" id="nav6" style="left:508.10px;top:202.73px;font-size:10.6px;color:#596981;font-weight:400;letter-spacing:0.255px;font-family:'Liberation Sans', sans-serif;">Settings</div>
<div class="t" id="h_addons" style="left:134.60px;top:260.06px;font-size:10.8px;color:#3f3f44;font-weight:400;letter-spacing:0.135px;font-family:'Liberation Sans', sans-serif;">Installed add-ons</div>
<div class="t" id="b1" style="left:227.50px;top:261.47px;font-size:9.6px;color:#ffffff;font-weight:700;letter-spacing:0.300px;font-family:'Liberation Sans', sans-serif;">$0.00/month</div>
<div class="t" id="cfg1" style="left:475.30px;top:261.95px;font-size:8.8px;color:#3a71d8;font-weight:400;letter-spacing:0.283px;font-family:'Liberation Sans', sans-serif;text-decoration:underline;text-underline-offset:1.6px">Configure Add-ons</div>
<div class="t" id="noadd" style="left:265.10px;top:303.02px;font-size:11.2px;color:#3f3f44;font-weight:400;letter-spacing:0.172px;font-family:'Liberation Sans', sans-serif;">There are no add-ons for this app</div>
<div class="t" id="noadd2" style="left:196.10px;top:320.60px;font-size:9.8px;color:#596981;font-weight:400;letter-spacing:0.170px;font-family:'Liberation Sans', sans-serif;">You can add add-ons to this app and they will show here.</div>
<div class="t" id="learn" style="left:454.80px;top:320.60px;font-size:9.8px;color:#3a71d8;font-weight:400;letter-spacing:0.132px;font-family:'Liberation Sans', sans-serif;text-decoration:underline;text-underline-offset:1.6px">Learn more</div>
<div class="t" id="h_dyno" style="left:134.20px;top:380.26px;font-size:10.8px;color:#3f3f44;font-weight:400;letter-spacing:0.334px;font-family:'Liberation Sans', sans-serif;">Dyno formation</div>
<div class="t" id="b2" style="left:220.00px;top:381.17px;font-size:9.6px;color:#ffffff;font-weight:700;letter-spacing:0.200px;font-family:'Liberation Sans', sans-serif;">$0.00/month</div>
<div class="t" id="cfg2" style="left:484.30px;top:380.85px;font-size:8.8px;color:#3a71d8;font-weight:400;letter-spacing:0.201px;font-family:'Liberation Sans', sans-serif;text-decoration:underline;text-underline-offset:1.6px">Configure Dynos</div>
<div class="t" id="free" style="left:145.40px;top:412.74px;font-size:10px;color:#596981;font-weight:400;letter-spacing:-0.026px;font-family:'Liberation Sans', sans-serif;">This app is using <b style="color:#3f3f44">free</b> dynos</div>
<div class="t" id="web" style="left:145.80px;top:446.09px;font-size:11px;color:#3f3f44;font-weight:400;letter-spacing:0.100px;font-family:'Liberation Sans', sans-serif;">web</div>
<div class="t" id="py" style="left:173.60px;top:446.82px;font-size:8.9px;color:#596981;font-weight:400;letter-spacing:0.026px;font-family:'Liberation Mono', monospace;">python main.py</div>
<div class="t" id="on" style="left:540.80px;top:446.53px;font-size:10.6px;color:#2e8a2e;font-weight:700;letter-spacing:0.400px;font-family:'Liberation Sans', sans-serif;">ON</div>
<div class="t" id="h_collab" style="left:134.40px;top:503.36px;font-size:10.8px;color:#3f3f44;font-weight:400;letter-spacing:0.130px;font-family:'Liberation Sans', sans-serif;">Collaborator activity</div>
<div class="t" id="mng" style="left:490.00px;top:504.75px;font-size:8.8px;color:#3a71d8;font-weight:400;letter-spacing:0.084px;font-family:'Liberation Sans', sans-serif;text-decoration:underline;text-underline-offset:1.6px">Manage Access</div>
<div class="t" id="email" style="left:289.20px;top:541.67px;font-size:9.9px;color:#596981;font-weight:400;letter-spacing:0.200px;font-family:'Liberation Sans', sans-serif;">.com</div>
<div class="t" id="deploy1" style="left:516.30px;top:541.27px;font-size:9.9px;color:#596981;font-weight:400;letter-spacing:0.542px;font-family:'Liberation Sans', sans-serif;"><b style="color:#3f3f44">1</b> deploy</div>
<div class="t" id="h_latest" style="left:601.90px;top:260.36px;font-size:10.8px;color:#3f3f44;font-weight:400;letter-spacing:0.059px;font-family:'Liberation Sans', sans-serif;">Latest activity</div>
<div class="t" id="allact" style="left:977.20px;top:261.25px;font-size:8.8px;color:#3a71d8;font-weight:400;letter-spacing:0.273px;font-family:'Liberation Sans', sans-serif;text-decoration:underline;text-underline-offset:1.6px">All Activity</div>
<div class="t" id="r0a" style="left:811.60px;top:295.01px;font-size:9.2px;color:#3f3f44;font-weight:400;letter-spacing:0.633px;font-family:'Liberation Sans', sans-serif;">Deployed</div>
<div class="t" id="r0t" style="left:665.20px;top:309.65px;font-size:9.1px;color:#596981;font-weight:400;letter-spacing:0.410px;font-family:'Liberation Sans', sans-serif;">Today at 2:59 PM · v3</div>
<div class="t" id="r1a" style="left:811.60px;top:347.21px;font-size:9.2px;color:#3b8a3b;font-weight:400;letter-spacing:0.455px;font-family:'Liberation Sans', sans-serif;">Build succeeded</div>
<div class="t" id="r1t" style="left:665.20px;top:362.55px;font-size:9.1px;color:#596981;font-weight:400;letter-spacing:0.608px;font-family:'Liberation Sans', sans-serif;">Today at 2:59 PM ·&nbsp;</div>
<div class="t" id="r2a" style="left:811.60px;top:400.11px;font-size:9.2px;color:#3f3f44;font-weight:400;letter-spacing:0.367px;font-family:'Liberation Sans', sans-serif;">Enable Logplex</div>
<div class="t" id="r2t" style="left:665.20px;top:414.95px;font-size:9.1px;color:#596981;font-weight:400;letter-spacing:0.417px;font-family:'Liberation Sans', sans-serif;">Today at 12:51 PM · v2</div>
<div class="t" id="r3a" style="left:811.60px;top:451.91px;font-size:9.2px;color:#3f3f44;font-weight:400;letter-spacing:0.397px;font-family:'Liberation Sans', sans-serif;">Initial release</div>
<div class="t" id="r3t" style="left:665.20px;top:467.45px;font-size:9.1px;color:#596981;font-weight:400;letter-spacing:0.417px;font-family:'Liberation Sans', sans-serif;">Today at 12:51 PM · v1</div>
<div class="t" id="viewlog" style="left:750.60px;top:362.55px;font-size:9.1px;color:#3a71d8;font-weight:400;letter-spacing:0.475px;font-family:'Liberation Sans', sans-serif;text-decoration:underline;text-underline-offset:1.6px">View build log</div>
<div class="t" id="temp" style="left:822.00px;top:743.05px;font-size:14px;color:#ffffff;font-weight:400;letter-spacing:-0.333px;font-family:'Liberation Sans', sans-serif;">28°C</div>
<div class="t" id="time" style="left:1066.50px;top:733.32px;font-size:11.5px;color:#ffffff;font-weight:400;letter-spacing:-0.400px;font-family:'Liberation Sans', sans-serif;">15:04</div>
<div class="t" id="date" style="left:1051.70px;top:752.02px;font-size:11.5px;color:#ffffff;font-weight:400;letter-spacing:0.000px;font-family:'Liberation Sans', sans-serif;">2021/10/02</div>
<div class="t" id="jp" style="left:-1.00px;top:742.15px;font-size:14px;color:#333333;font-weight:400;letter-spacing:-1.000px;font-family:'Liberation Sans', sans-serif;">に入力して検索</div>
</body></html>
